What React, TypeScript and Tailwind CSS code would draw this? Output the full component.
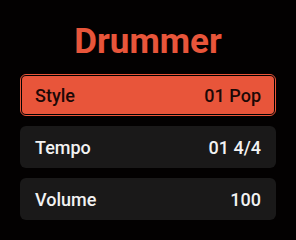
import React from "react";

const font = { fontFamily: "Roboto, 'Liberation Sans', sans-serif" };

function Row({ label, value, active }: { label: string; value: string; active?: boolean }) {
  if (active) {
    return (
      <div className="h-[42px] rounded-[6px] border border-[#e8553a] bg-black p-px">
        <div className="flex h-full items-center justify-between rounded-[4px] bg-[#e8553a] pl-[13px] pr-[13px] text-[18px] font-medium text-[#1c0806]">
          <span>{label}</span>
          <span>{value}</span>
        </div>
      </div>
    );
  }
  return (
    <div className="flex h-[42px] items-center justify-between rounded-[6px] bg-[#1a1919] pl-[15px] pr-[15px] text-[18px] font-medium text-[#f2f2f2]">
      <span>{label}</span>
      <span>{value}</span>
    </div>
  );
}

export default function App() {
  return (
    <div className="h-[240px] w-[296px] bg-[#030101] px-5" style={font}>
      <div className="flex h-[74px] items-start justify-center pt-[22px]">
        <h1 className="text-[35px] font-bold leading-[40px] text-[#e8553a]">Drummer</h1>
      </div>
      <div className="flex flex-col gap-[10px]">
        <Row label="Style" value="01 Pop" active />
        <Row label="Tempo" value="01 4/4" />
        <Row label="Volume" value="100" />
      </div>
    </div>
  );
}
